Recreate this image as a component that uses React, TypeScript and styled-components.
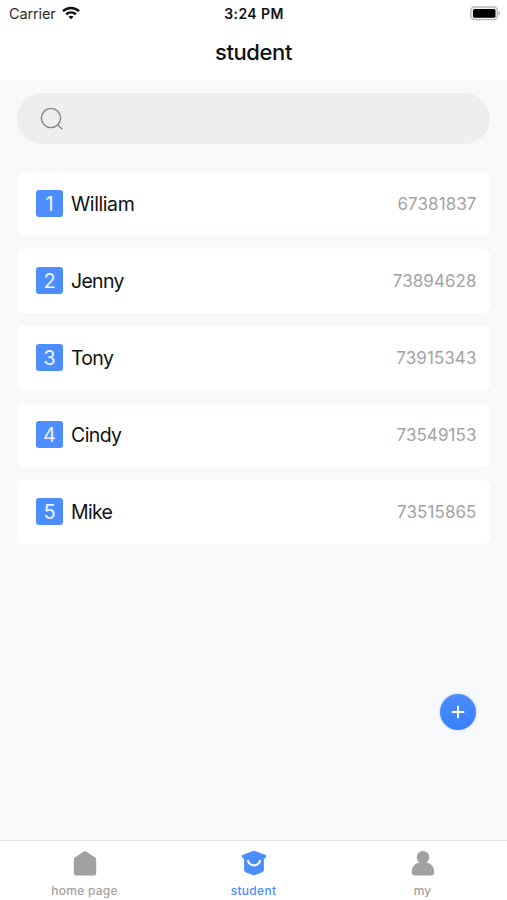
import React from "react";
import styled, { createGlobalStyle } from "styled-components";

const GlobalStyle = createGlobalStyle`
  * { box-sizing: border-box; }
  body { margin: 0; font-family: Inter, "Liberation Sans", sans-serif; color: #111; }
`;

const Screen = styled.div`
  display: flex;
  flex-direction: column;
  height: 900px;
  width: 507px;
  background: #f6f8fa;
  overflow: hidden;
`;

const Header = styled.header`
  height: 80px;
  background: #fff;
  flex: none;
`;

const StatusBar = styled.div`
  display: grid;
  grid-template-columns: 1fr auto 1fr;
  align-items: center;
  height: 27px;
  padding: 0 6px 0 9px;
`;

const Carrier = styled.div`
  display: flex;
  align-items: center;
  gap: 6px;
  font-size: 14.5px;
  letter-spacing: -0.12px;
  color: #2b2b2b;

  svg { margin-bottom: 2px; }
`;

const Clock = styled.div`
  font-size: 14px;
  font-weight: 600;
  letter-spacing: 0.4px;
  margin-right: 2px;
`;

const Battery = styled.svg`
  justify-self: end;
  margin-bottom: 1px;
`;

const Title = styled.h1`
  margin: 0;
  height: 50px;
  line-height: 50px;
  text-align: center;
  font-size: 22px;
  font-weight: 500;
  letter-spacing: -0.4px;
`;

const Content = styled.main`
  flex: 1;
  display: flex;
  flex-direction: column;
  padding: 13px 17px 0 17px;
`;

const SearchField = styled.div`
  display: flex;
  align-items: center;
  height: 51px;
  padding-left: 23px;
  border-radius: 26px;
  background: #eee;
`;

const List = styled.ul`
  list-style: none;
  display: flex;
  flex-direction: column;
  gap: 13px;
  margin: 28px 0 0;
  padding: 0;
`;

const Row = styled.li`
  display: flex;
  align-items: center;
  height: 64px;
  padding: 0 13.5px 0 19px;
  border-radius: 7px;
  background: #fff;
`;

const Rank = styled.span`
  width: 27px;
  height: 27px;
  margin-bottom: 1px;
  line-height: 29px;
  border-radius: 3px;
  background: #4c8dff;
  color: #edf4ff;
  font-size: 20px;
  text-align: center;
`;

const Name = styled.span<{ $spacing: number }>`
  flex: 1;
  margin-left: 8px;
  font-size: 19.5px;
  letter-spacing: ${(p) => p.$spacing}px;
`;

const Code = styled.span<{ $spacing: number }>`
  color: #a3a3a3;
  font-size: 17px;
  letter-spacing: ${(p) => p.$spacing}px;
`;

const AddButton = styled.button`
  display: flex;
  align-items: center;
  justify-content: center;
  align-self: flex-end;
  width: 36px;
  height: 36px;
  margin: auto 14px 110px 0;
  padding: 0;
  border: 0;
  border-radius: 50%;
  background: linear-gradient(#4c8dff, #3a7ffa);
  box-shadow: 0 0 3px #bdd4fb;
`;

const TabBar = styled.nav`
  display: grid;
  grid-template-columns: repeat(3, 1fr);
  flex: none;
  height: 60px;
  border-top: 1px solid #dfe1e4;
  background: #fff;
`;

const Tab = styled.div<{ $active?: boolean; $spacing: number }>`
  display: flex;
  flex-direction: column;
  align-items: center;
  padding-top: 9px;
  color: ${(p) => (p.$active ? "#4c8dff" : "#a1a1a1")};
  font-size: 12px;
  font-weight: 500;
  line-height: 16px;
  letter-spacing: ${(p) => p.$spacing}px;

  svg { display: block; margin-bottom: 7px; }
`;

const students = [
  { name: "William", code: "67381837", nameSpacing: -0.4, codeSpacing: 0.07 },
  { name: "Jenny", code: "73894628", nameSpacing: -0.7, codeSpacing: 0.04 },
  { name: "Tony", code: "73915343", nameSpacing: -0.7, codeSpacing: 0.07 },
  { name: "Cindy", code: "73549153", nameSpacing: -0.6, codeSpacing: 0.07 },
  { name: "Mike", code: "73515865", nameSpacing: -0.7, codeSpacing: 0.07 },
];

const WifiIcon = () => (
  <svg width="18" height="14" viewBox="0 0 18 14" fill="none" stroke="#111" strokeWidth="2.5">
    <path d="M1 5.2C5.5.9 12.5.9 17 5.2" />
    <path d="M4.1 8.3C7 5.8 11 5.8 13.9 8.3" />
    <path d="M6.5 10.7C8 9.4 10 9.4 11.5 10.7L9 13.2Z" fill="#111" stroke="none" />
  </svg>
);

const SearchIcon = () => (
  <svg width="24" height="24" viewBox="0 0 24 24" fill="none" stroke="#858585" strokeWidth="1.4">
    <circle cx="11" cy="11" r="9.6" />
    <path d="M17.5 17.8L22.3 22.2" />
  </svg>
);

const HomeIcon = () => (
  <svg width="24" height="26" viewBox="0 0 24 26" fill="currentColor">
    <path d="M10.8 1.6Q12 .8 13.2 1.6L22.2 7.5Q23.2 8.2 23.2 9.4V23.2Q23.2 25.4 21 25.4H3Q.8 25.4 .8 23.2V9.4Q.8 8.2 1.8 7.5Z" />
  </svg>
);

const StudentIcon = () => (
  <svg width="26" height="26" viewBox="0 0 26 26">
    <path fill="currentColor" d="M12.1 1.1Q13 .7 13.9 1.1L24.6 5.1Q25.8 5.6 25.1 6.7L24.1 8.2Q23.8 8.7 22.9 8.7V20Q22.9 21.6 21.4 22.2L14.2 25.1Q13 25.5 11.8 25.1L4.6 22.2Q3.1 21.6 3.1 20V8.7Q2.2 8.7 1.9 8.2L.9 6.7Q.2 5.6 1.4 5.1Z" />
    <path fill="none" stroke="#fff" strokeWidth="2" strokeLinecap="round" d="M7 10.9C9.2 16.9 16.8 16.9 19 10.9" />
  </svg>
);

const PersonIcon = () => (
  <svg width="24" height="26" viewBox="0 0 24 26" fill="currentColor">
    <path d="M8.5 12.5A6.3 6.3 0 1 1 15.5 12.5C20.8 13.5 23.2 17.4 23.2 22.2Q23.2 25.4 20 25.4H4Q.8 25.4 .8 22.2C.8 17.4 3.2 13.5 8.5 12.5Z" />
  </svg>
);

export default function App() {
  return (
    <Screen>
      <GlobalStyle />
      <Header>
        <StatusBar>
          <Carrier>Carrier <WifiIcon /></Carrier>
          <Clock>3:24 PM</Clock>
          <Battery width="31" height="15" viewBox="0 0 31 15">
            <rect x=".8" y="1" width="26.5" height="12.6" rx="3.6" fill="#f2f2f2" stroke="#b8b8b8" strokeWidth="1.3" />
            <rect x="3" y="3" width="22.5" height="8.8" rx="1.5" fill="#000" />
            <path d="M28.5 4.8Q31.4 7.3 28.5 9.8Z" fill="#aaa" />
          </Battery>
        </StatusBar>
        <Title>student</Title>
      </Header>
      <Content>
        <SearchField><SearchIcon /></SearchField>
        <List>
          {students.map((s, i) => (
            <Row key={s.code}>
              <Rank>{i + 1}</Rank>
              <Name $spacing={s.nameSpacing}>{s.name}</Name>
              <Code $spacing={s.codeSpacing}>{s.code}</Code>
            </Row>
          ))}
        </List>
        <AddButton aria-label="Add student">
          <svg width="14" height="14" viewBox="0 0 14 14" stroke="#fff" strokeWidth="1.9">
            <path d="M7 .7V13.3M.7 7H13.3" />
          </svg>
        </AddButton>
      </Content>
      <TabBar>
        <Tab $spacing={0.25}><HomeIcon />home page</Tab>
        <Tab $active $spacing={0.3}><StudentIcon />student</Tab>
        <Tab $spacing={0.1}><PersonIcon />my</Tab>
      </TabBar>
    </Screen>
  );
}
